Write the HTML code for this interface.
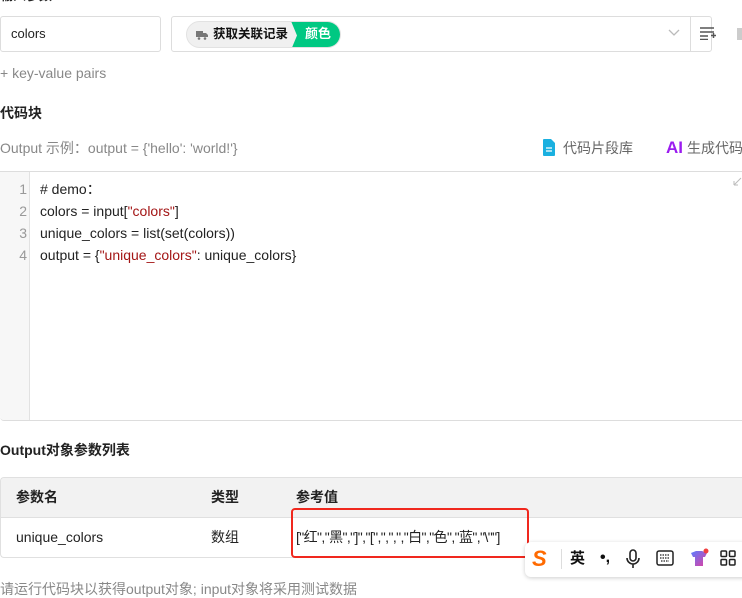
<!DOCTYPE html>
<html><head><meta charset="utf-8">
<style>
*{box-sizing:border-box;margin:0;padding:0}
body{width:742px;height:596px;overflow:hidden;background:#fff;font-family:"Liberation Sans","Noto Sans CJK SC",sans-serif;position:relative;color:#222;line-height:18px;font-size:14px}
.abs{position:absolute;white-space:nowrap}
.gray{color:#888}
</style></head><body>
<div class="abs" style="left:0;top:-13px;font-size:13px;font-weight:bold;color:#222">输入参数</div>

<div class="abs" style="left:0;top:16px;width:161px;height:36px;border:1px solid #ddd;border-radius:3px;font-size:13px;padding:8px 10px">colors</div>

<div class="abs" style="left:171px;top:16px;width:541px;height:36px;border:1px solid #ddd;border-radius:3px"></div>
<div class="abs" style="left:690px;top:17px;width:1px;height:34px;background:#ddd"></div>
<div class="abs" style="left:186px;top:21px;width:155px;height:27px;border-radius:14px;background:#f0f0f0;border:1px solid #e2e2e2;overflow:hidden">
  <svg class="abs" style="left:9px;top:8px" width="12" height="10" viewBox="0 0 12 10"><rect x="0" y="1" width="7" height="6" fill="#777"/><path d="M7 3h3l2 2v2H7z" fill="#777"/><circle cx="3" cy="8.5" r="1.3" fill="#777"/><circle cx="9" cy="8.5" r="1.3" fill="#777"/></svg>
  <div class="abs" style="left:26px;top:3px;font-size:12.5px;font-weight:bold;color:#111">获取关联记录</div>
  <div class="abs" style="left:104px;top:-1px;width:60px;height:29px;background:#00c882;clip-path:polygon(0 0,100% 0,100% 100%,0 100%,6px 50%)"></div>
  <div class="abs" style="left:118px;top:3px;font-size:13px;font-weight:bold;color:#fff">颜色</div>
</div>
<svg class="abs" style="left:668px;top:29px" width="12" height="8" viewBox="0 0 12 8"><path d="M1 1l5 5 5-5" fill="none" stroke="#bbb" stroke-width="1.3"/></svg>
<svg class="abs" style="left:700px;top:27px" width="16" height="13" viewBox="0 0 16 13"><path d="M0 1h14M0 5h14M0 9h8M0 12.5h8M11 8.5h5M13.5 6v5" stroke="#555" stroke-width="1.5" fill="none"/></svg>
<div class="abs" style="left:737px;top:28px;width:5px;height:12px;background:#ccc"></div>

<div class="abs gray" style="left:0;top:64px;font-size:14px">+ key-value pairs</div>

<div class="abs" style="left:0;top:104px;font-size:14px;font-weight:bold">代码块</div>

<div class="abs gray" style="left:0;top:139px;font-size:14px">Output 示例：output = {'hello': 'world!'}</div>
<svg class="abs" style="left:543px;top:139px" width="12" height="17" viewBox="0 0 12 17"><path d="M0 1a1 1 0 0 1 1-1h7l4 4v12a1 1 0 0 1-1 1H1a1 1 0 0 1-1-1z" fill="#1ab0e0"/><path d="M3 9h6M3 12h6" stroke="#fff" stroke-width="1.3"/></svg>
<div class="abs" style="left:563px;top:139px;font-size:14px;color:#666">代码片段库</div>
<div class="abs" style="left:666px;top:138px;font-size:17px;font-weight:bold;color:#9b1cf0;line-height:20px">AI</div>
<div class="abs" style="left:687px;top:139px;font-size:14px;color:#666">生成代码</div>

<div class="abs" style="left:0;top:171px;width:760px;height:250px;border:1px solid #ddd;border-radius:0 0 0 4px;border-left:none;background:#fff"></div>
<div class="abs" style="left:0;top:172px;width:30px;height:248px;background:#f7f7f7;border-right:1px solid #e2e2e2;border-radius:0 0 0 4px"></div>
<svg class="abs" style="left:733px;top:177px" width="9" height="9" viewBox="0 0 9 9"><path d="M1 8L8 1M1 8V4M1 8h4" stroke="#bbb" fill="none"/></svg>
<div class="abs" style="left:14px;top:178px;font-size:14px;line-height:22px;color:#999;text-align:right;width:13px">1<br>2<br>3<br>4</div>
<div class="abs" style="left:40px;top:178px;font-size:14px;line-height:22px;color:#222;white-space:pre"># demo：
colors = input[<span style="color:#a31515">"colors"</span>]
unique_colors = list(set(colors))
output = {<span style="color:#a31515">"unique_colors"</span>: unique_colors}</div>

<div class="abs" style="left:0;top:441px;font-size:14px;font-weight:bold">Output对象参数列表</div>

<div class="abs" style="left:0;top:477px;width:760px;height:81px;border:1px solid #e0e0e0;border-right:none;border-radius:4px 0 0 4px;overflow:hidden">
  <div style="height:40px;background:#f2f2f2;border-bottom:1px solid #e0e0e0"></div>
</div>
<div class="abs" style="left:16px;top:488px;font-size:14px;font-weight:bold">参数名</div>
<div class="abs" style="left:211px;top:488px;font-size:14px;font-weight:bold">类型</div>
<div class="abs" style="left:296px;top:488px;font-size:14px;font-weight:bold">参考值</div>
<div class="abs" style="left:16px;top:528px;font-size:14px">unique_colors</div>
<div class="abs" style="left:211px;top:528px;font-size:14px">数组</div>
<div class="abs" style="left:296px;top:528px;font-size:14px;letter-spacing:-0.6px">["红","黑","]","[",",",","白","色","蓝","\""]</div>
<div class="abs" style="left:291px;top:508px;width:238px;height:50px;border:2.5px solid #f0281e;border-radius:4px"></div>

<div class="abs" style="left:525px;top:542px;width:230px;height:35px;background:#fff;border-radius:6px;box-shadow:0 1px 4px rgba(0,0,0,.2)"></div>
<div class="abs" style="left:532px;top:548px;font-size:22px;line-height:22px;font-weight:900;color:#ff6a00;font-style:italic">S</div>
<div class="abs" style="left:561px;top:549px;width:1px;height:20px;background:#ddd"></div>
<div class="abs" style="left:570px;top:550px;font-size:15px;font-weight:bold;color:#111">英</div>
<div class="abs" style="left:600px;top:549px;font-size:16px;font-weight:bold;color:#111">•,</div>
<svg class="abs" style="left:626px;top:549px" width="14" height="20" viewBox="0 0 14 20"><rect x="4" y="1" width="6" height="11" rx="3" fill="none" stroke="#222" stroke-width="1.6"/><path d="M1 9a6 6 0 0 0 12 0M7 15v4" fill="none" stroke="#222" stroke-width="1.6"/></svg>
<svg class="abs" style="left:656px;top:550px" width="18" height="16" viewBox="0 0 18 16"><rect x="1" y="1" width="16" height="14" rx="2" fill="none" stroke="#222" stroke-width="1.5"/><path d="M4 5h10M4 8h10M5 11h8" stroke="#222" stroke-width="1.2" stroke-dasharray="1.5 1"/></svg>
<svg class="abs" style="left:689px;top:548px" width="20" height="20" viewBox="0 0 20 20"><defs><linearGradient id="g" x1="0" y1="0" x2="1" y2="1"><stop offset="0" stop-color="#5b7bff"/><stop offset="1" stop-color="#e040a0"/></linearGradient></defs><path d="M2 5l5-2h6l5 2-2 4h-2v9H6V9H4z" fill="url(#g)"/><circle cx="17" cy="3" r="2.5" fill="#f04040"/></svg>
<svg class="abs" style="left:720px;top:550px" width="16" height="16" viewBox="0 0 16 16"><g fill="none" stroke="#222" stroke-width="1.5"><rect x="1" y="1" width="5.5" height="5.5" rx="1"/><rect x="9.5" y="1" width="5.5" height="5.5" rx="1"/><rect x="1" y="9.5" width="5.5" height="5.5" rx="1"/><rect x="9.5" y="9.5" width="5.5" height="5.5" rx="1"/></g></svg>

<div class="abs gray" style="left:0;top:580px;font-size:14px">请运行代码块以获得output对象; input对象将采用测试数据</div>
</body></html>
